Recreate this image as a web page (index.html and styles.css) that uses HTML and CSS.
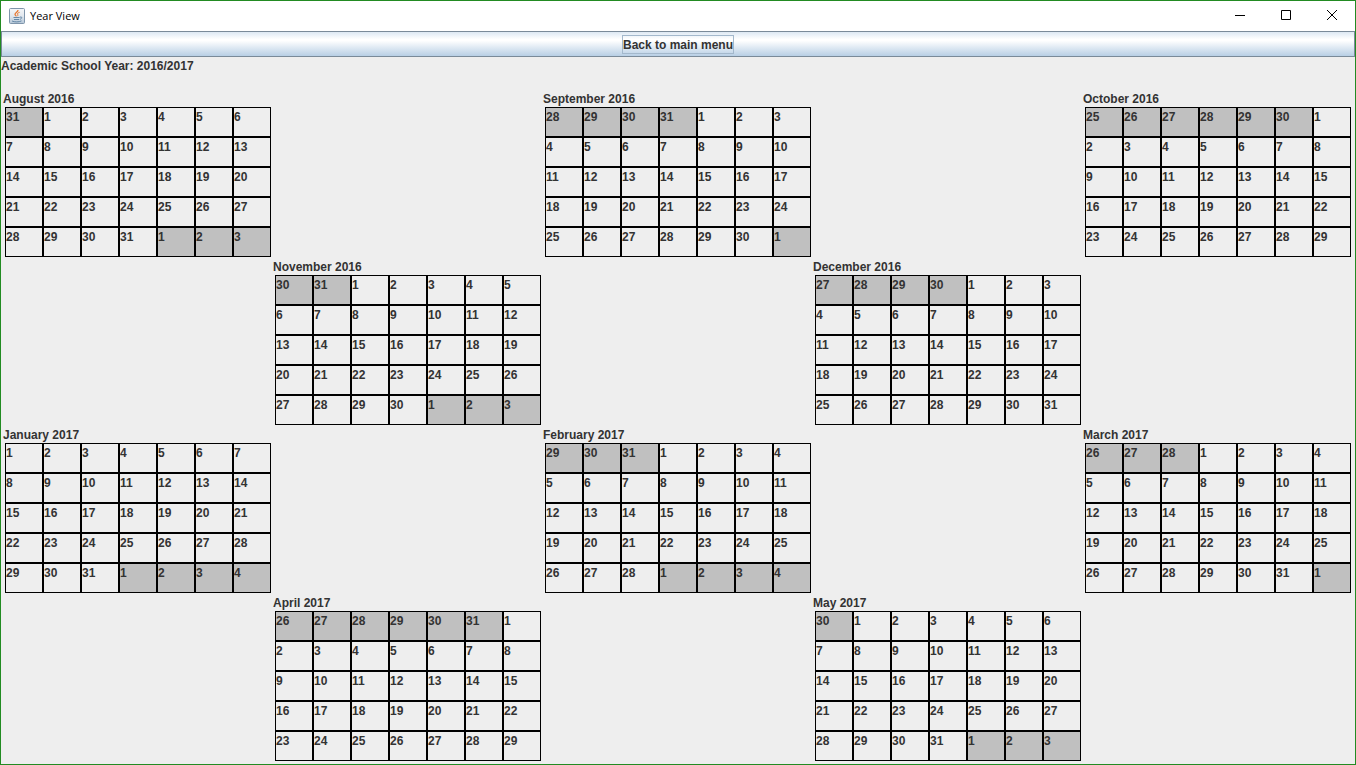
FILE: index.html
```html
<!DOCTYPE html>
<html lang="en">
<head>
<meta charset="utf-8">
<title>Year View</title>
<link rel="stylesheet" href="styles.css">
</head>
<body>
<div class="window">
  <header class="titlebar">
    <svg class="app-icon" width="16" height="16" viewBox="0 0 16 16" aria-hidden="true">
      <defs>
        <linearGradient id="tile" x1="0" y1="0" x2="0" y2="1">
          <stop offset="0" stop-color="#f4f6f8"/>
          <stop offset="0.5" stop-color="#e2e8ee"/>
          <stop offset="1" stop-color="#b4c6d7"/>
        </linearGradient>
      </defs>
      <rect x="0.5" y="0.5" width="15" height="15" rx="1" fill="url(#tile)" stroke="#7f95ab"/>
      <path d="M9 2C9.300 4 5.800 4.800 6 6.300C6.100 7.200 7 7.500 7.200 8.300" fill="none" stroke="#e8762c" stroke-width="1.200"/>
      <path d="M10.600 4.300C8.400 5 8.100 5.800 8.700 6.500C9.100 7.100 8.800 7.700 8.300 8.200" fill="none" stroke="#e8762c" stroke-width="1"/>
      <path d="M4.500 9.500H10.500M5 11.500H10M3 13C5.500 14.200 10 14.200 12.500 12.900M10.800 9.200C13.600 8.200 13.200 10.700 10.800 11.400" fill="none" stroke="#5a7f9f" stroke-width="0.900"/>
    </svg>
    <h1 class="title">Year View</h1>
    <div class="controls">
      <button class="control" type="button" aria-label="Minimize">
        <svg width="12" height="12" viewBox="0 0 12 12"><path d="M1 5.500H11"/></svg>
      </button>
      <button class="control" type="button" aria-label="Maximize">
        <svg width="12" height="12" viewBox="0 0 12 12"><path d="M1.500 0.500H10.500V9.500H1.500Z"/></svg>
      </button>
      <button class="control" type="button" aria-label="Close">
        <svg width="12" height="12" viewBox="0 0 12 12"><path d="M1 0L11 10M11 0L1 10"/></svg>
      </button>
    </div>
  </header>
  <button class="back" type="button"><span class="back-label">Back to main menu</span></button>
  <p class="year">Academic School Year: 2016/2017</p>
  <main class="months" id="months"></main>
</div>
<script src="script.js"></script>
</body>
</html>
```
FILE: styles.css
```css
* {
  box-sizing: border-box;
}

body {
  margin: 0;
  background: #eeeeee;
  color: #333333;
  font: bold 12px/18px "Liberation Sans", Arial, sans-serif;
}

.window {
  min-height: 100vh;
  display: flex;
  flex-direction: column;
  border: 1px solid #228b22;
}

.titlebar {
  display: flex;
  align-items: center;
  height: 30px;
  padding-left: 8px;
  background: #ffffff;
  color: #000000;
}

.app-icon {
  flex: none;
}

.title {
  flex: 1;
  margin: 0 0 0 5px;
  font: 11px/18px "Open Sans", "Noto Sans", sans-serif;
}

.controls {
  display: flex;
}

.control {
  display: flex;
  align-items: center;
  justify-content: center;
  width: 46px;
  height: 30px;
  padding: 0;
  border: 0;
  background: transparent;
}

.control svg {
  fill: none;
  stroke: #000000;
  stroke-width: 1;
}

.back {
  display: flex;
  align-items: center;
  justify-content: center;
  height: 26px;
  padding: 0;
  border: 1px solid #7a8a99;
  background: linear-gradient(#dde8f3 0%, #ffffff 30%, #ffffff 36%, #b8cfe5 100%);
  color: inherit;
  font: inherit;
}

.back-label {
  padding-top: 1px;
  border: 1px solid #a3b8cc;
  line-height: 16px;
}

.year {
  margin: 0 0 14px;
}

.months {
  display: grid;
  grid-template-columns: repeat(5, 1fr);
  padding: 0 2px;
}

.month {
  justify-self: start;
  padding: 0 2px;
  border-spacing: 0;
}

.month caption {
  padding-top: 2px;
  line-height: 16px;
  text-align: left;
}

.col-1 { grid-column: 1; }
.col-2 { grid-column: 2; }
.col-3 { grid-column: 3; }
.col-4 { grid-column: 4; }
.col-5 { grid-column: 5; }

.day {
  width: 38px;
  height: 30px;
  padding: 0;
  border: 1px solid #000000;
  vertical-align: top;
}

.day-outside {
  background: #c0c0c0;
}
```
FILE: script.js
```js
const WEEKS = 5;
const MONTH_NAMES = ["January", "February", "March", "April", "May", "June", "July",
  "August", "September", "October", "November", "December"];

// Rows alternate between three months and two months.
const layout = [
  { year: 2016, month: 7, column: 1 },
  { year: 2016, month: 8, column: 3 },
  { year: 2016, month: 9, column: 5 },
  { year: 2016, month: 10, column: 2 },
  { year: 2016, month: 11, column: 4 },
  { year: 2017, month: 0, column: 1 },
  { year: 2017, month: 1, column: 3 },
  { year: 2017, month: 2, column: 5 },
  { year: 2017, month: 3, column: 2 },
  { year: 2017, month: 4, column: 4 }
];

function buildMonth({ year, month, column }) {
  const table = document.createElement("table");
  table.className = `month col-${column}`;
  table.createCaption().textContent = `${MONTH_NAMES[month]} ${year}`;
  const body = table.createTBody();
  const offset = new Date(year, month, 1).getDay();
  for (let week = 0; week < WEEKS; week++) {
    const row = body.insertRow();
    for (let day = 0; day < 7; day++) {
      const date = new Date(year, month, 1 - offset + week * 7 + day);
      const cell = row.insertCell();
      cell.className = date.getMonth() === month ? "day" : "day day-outside";
      cell.textContent = date.getDate();
    }
  }
  return table;
}

document.getElementById("months").append(...layout.map(buildMonth));
```
